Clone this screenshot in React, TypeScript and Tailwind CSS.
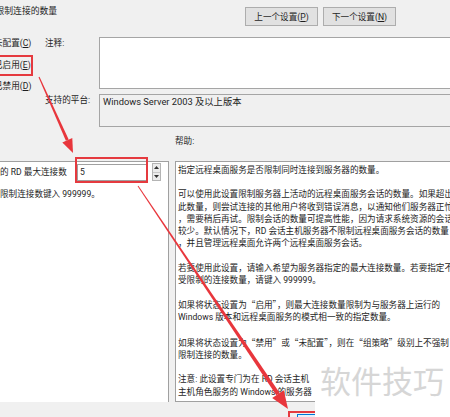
import React from 'react';

// 帮助文本（按原图的折行逐行给出；最后一段只保留水印未遮住的部分）
const helpParagraphs: string[][] = [
  ['指定远程桌面服务是否限制同时连接到服务器的数量。'],
  [
    '可以使用此设置限制服务器上活动的远程桌面服务会话的数量。如果超出',
    '此数量，则尝试连接的其他用户将收到错误消息，以通知他们服务器正忙',
    '，需要稍后再试。限制会话的数量可提高性能，因为请求系统资源的会话',
    '较少。默认情况下，RD 会话主机服务器不限制远程桌面服务会话的数量',
    '，并且管理远程桌面允许两个远程桌面服务会话。',
  ],
  [
    '若要使用此设置，请输入希望为服务器指定的最大连接数量。若要指定不',
    '受限制的连接数量，请键入 999999。',
  ],
  [
    '如果将状态设置为“启用”，则最大连接数量限制为与服务器上运行的',
    'Windows 版本和远程桌面服务的模式相一致的指定数量。',
  ],
  [
    '如果将状态设置为“禁用”或“未配置”，则在“组策略”级别上不强制',
    '限制连接的数量。',
  ],
  [
    '注意: 此设置专门为在 RD 会话主机',
    '主机角色服务的 Windows 的服务器',
  ],
];

// 中文引号用 CJK 字体显示成全角
function renderLine(line: string) {
  return line.split(/([“”])/).map((part, k) =>
    part === '“' || part === '”' ? (
      <span key={k} className="font-['Noto_Sans_CJK_SC',sans-serif]">{part}</span>
    ) : (
      <React.Fragment key={k}>{part}</React.Fragment>
    )
  );
}

function NavButton({ children }: { children: React.ReactNode }) {
  return (
    <div className="w-[73px] h-[19px] border border-[#adadad] bg-[#e1e1e1] flex items-center justify-center whitespace-nowrap">
      {children}
    </div>
  );
}

function Spinner() {
  return (
    <div className="ml-[4px] w-[9px] h-[18px] border border-[#b4b4b4] bg-[#ececec] flex flex-col">
      <div className="flex-1 flex items-center justify-center border-b border-[#c8c8c8]">
        <svg width="5" height="3" viewBox="0 0 5 3"><polygon points="2.5,0 5,3 0,3" fill="#333" /></svg>
      </div>
      <div className="flex-1 flex items-center justify-center">
        <svg width="5" height="3" viewBox="0 0 5 3"><polygon points="0,0 5,0 2.5,3" fill="#333" /></svg>
      </div>
    </div>
  );
}

export default function App() {
  return (
    <div className="relative w-[450px] h-[417px] overflow-hidden bg-[#f0f0f0] text-[#1e1e1e] text-[8.6px] leading-[12px] font-['Roboto','Noto_Sans_CJK_SC',sans-serif]">
      {/* 顶部：标题 + 上一个/下一个 */}
      <div className="flex h-[37px]">
        <div className="-ml-[4.5px] pt-[5px] text-[8.8px] whitespace-nowrap">限制连接的数量</div>
        <div className="ml-auto mr-[54px] mt-[7px] flex gap-[5px]">
          <NavButton>上一个设置(<u>P</u>)</NavButton>
          <NavButton>下一个设置(<u>N</u>)</NavButton>
        </div>
      </div>

      {/* 状态单选 + 注释 / 支持的平台 */}
      <div className="flex h-[90px]">
        <div className="-ml-[6px] w-[51px] flex flex-col gap-[9.5px] whitespace-nowrap">
          <div>未配置(<u>C</u>)</div>
          <div>已启用(<u>E</u>)</div>
          <div>已禁用(<u>D</u>)</div>
        </div>
        <div className="flex-1 -mr-[4px] flex flex-col gap-[5px]">
          <div className="flex">
            <div className="w-[54px]">注释:</div>
            <div className="flex-1 h-[52px] bg-white border border-[#a5a5a5]" />
          </div>
          <div className="flex">
            <div className="w-[54px] whitespace-nowrap">支持的平台:</div>
            <div className="flex-1 h-[33px] border border-[#a5a5a5] pl-[3px] pt-[1px] text-[9.3px] whitespace-nowrap">
              Windows Server 2003 及以上版本
            </div>
          </div>
        </div>
      </div>

      {/* 帮助标题 */}
      <div className="h-[34px] pl-[175px] pt-[8px]">帮助:</div>

      {/* 选项 / 帮助 面板 */}
      <div className="flex h-[241px] gap-[6px]">
        <div className="w-[169px] bg-white border-t border-r border-[#a0a0a0] whitespace-nowrap">
          <div className="flex items-center mt-[1px]">
            <div className="w-[77px]">的 RD 最大连接数</div>
            <div className="w-[71px] h-[17px] border border-[#a0a0a0] bg-white pl-[2px] flex items-center">5</div>
            <Spinner />
          </div>
          <div className="mt-[7px]">限制连接数键入 999999。</div>
        </div>
        <div className="flex-1 -mr-[20px] bg-white border border-[#a0a0a0] pl-[2px] pt-[2px] leading-[12.2px] whitespace-nowrap">
          {helpParagraphs.map((p, i) => (
            <div key={i} className={i > 0 ? 'mt-[12.2px]' : ''}>
              {p.map((line, j) => (
                <div key={j}>{renderLine(line)}</div>
              ))}
            </div>
          ))}
        </div>
      </div>

      {/* 底部按钮条 */}
      <div className="h-[15px] pl-[297px] pt-[12px]">
        <div className="w-[60px] h-[20px] border border-[#0078d7] bg-[#e5f1fb]" />
      </div>

      {/* 标注：红框 */}
      <div className="absolute left-[-3px] top-[55px] w-[36px] h-[21px] border-2 border-[#e53a3f]" />
      <div className="absolute left-[75px] top-[157px] w-[73px] h-[26px] border-2 border-[#e53a3f]" />
      <div className="absolute left-[288px] top-[411px] w-[40px] h-[12px] border-2 border-[#e53a3f]" />

      {/* 标注：箭头 */}
      <svg className="absolute inset-0 pointer-events-none" width="450" height="417" viewBox="0 0 450 417">
        <polygon points="39.5,76.8 68.7,139.6 65.9,140.8 38.5,77.2" fill="#e8363c" />
        <polygon points="72.3,137.9 73,153 62.3,142.5" fill="#e8363c" />
        <polygon points="138.4,185.7 279.7,393 276.3,395.2 137.6,186.3" fill="#e8363c" />
        <polygon points="283.8,390.2 288,409 272.2,398" fill="#e8363c" />
      </svg>

      {/* 水印 */}
      <div className="absolute left-[315px] top-[363px] w-[135px] h-[54px] bg-white pl-[5px] pt-[4px]">
        <div className="text-[31px] leading-[31px] text-[#d6d6d6] whitespace-nowrap">软件技巧</div>
      </div>
    </div>
  );
}
